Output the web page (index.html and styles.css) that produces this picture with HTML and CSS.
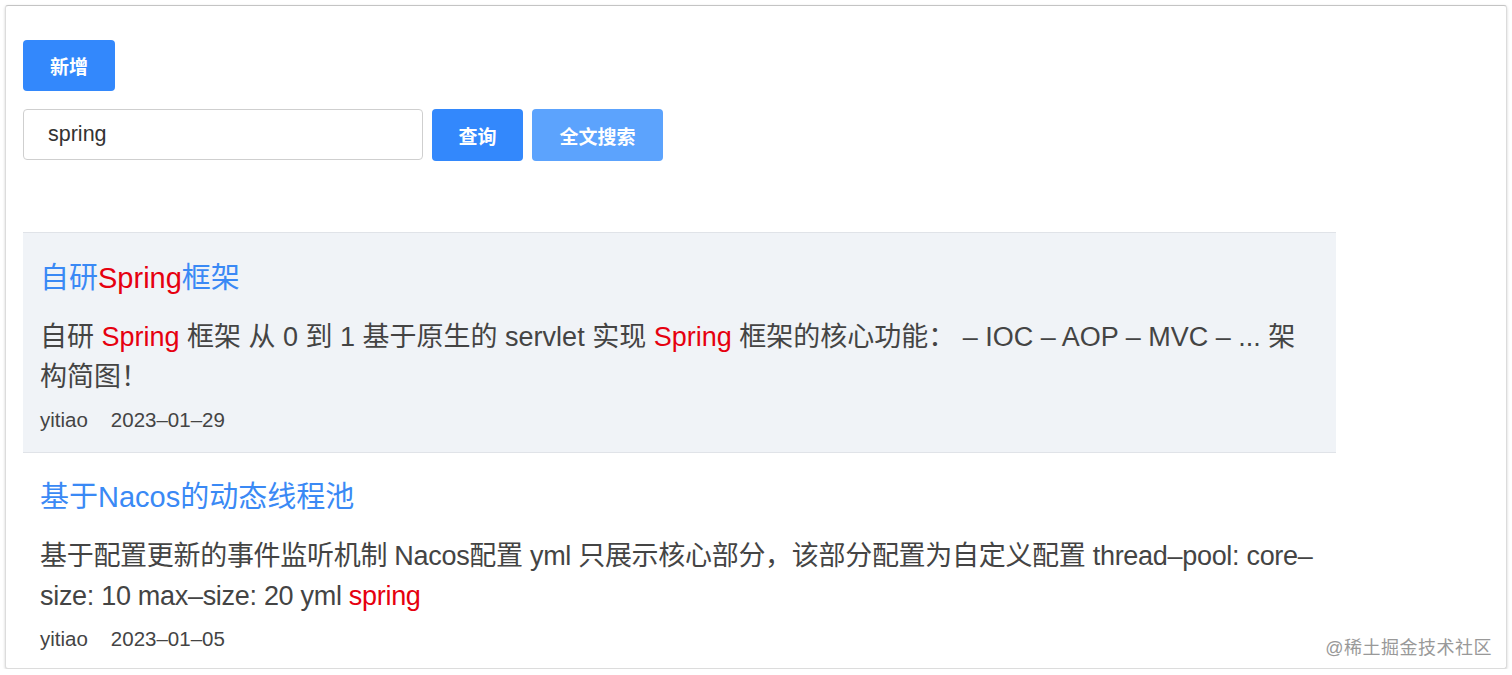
FILE: index.html
```html
<!DOCTYPE html>
<html lang="zh-CN">
<head>
<meta charset="utf-8">
<title>搜索</title>
<link rel="stylesheet" href="styles.css">
</head>
<body>
<div class="window">
  <div class="toolbar">
    <button class="btn btn-primary btn-add">新增</button>
  </div>
  <div class="search">
    <input class="search-input" type="text" value="spring">
    <button class="btn btn-primary btn-query">查询</button>
    <button class="btn btn-light btn-full">全文搜索</button>
  </div>
  <ul class="list">
    <li class="item item-active">
      <h3 class="title">自研<em>Spring</em>框架</h3>
      <p class="desc">自研 <em>Spring</em> 框架 从 0 到 1 基于原生的 servlet 实现 <em>Spring</em> 框架的核心功能： – IOC – AOP – MVC – ... 架构简图！</p>
      <div class="meta"><span>yitiao</span><span>2023–01–29</span></div>
    </li>
    <li class="item">
      <h3 class="title">基于Nacos的动态线程池</h3>
      <p class="desc desc-tight">基于配置更新的事件监听机制 Nacos配置 yml 只展示核心部分，该部分配置为自定义配置 thread–pool: core–size: 10 max–size: 20 yml <em>spring</em></p>
      <div class="meta"><span>yitiao</span><span>2023–01–05</span></div>
    </li>
  </ul>
  <div class="watermark">@稀土掘金技术社区</div>
</div>
</body>
</html>
```
FILE: styles.css
```css
html, body {
  margin: 0;
  padding: 0;
  background: #ffffff;
}
body {
  font-family: "Liberation Sans", "Noto Sans CJK SC", sans-serif;
  color: #444;
  padding: 5px 5px 0 5px;
}
.window {
  position: relative;
  height: 664px;
  box-sizing: border-box;
  background: #fff;
  border: 1px solid #dcdcdc;
  border-top-color: #c4c4c4;
  border-radius: 3px;
  box-shadow: 0 1px 3px rgba(0,0,0,0.18);
  padding: 34px 17px 0 17px;
  overflow: hidden;
}
.toolbar {
  display: flex;
}
.btn {
  border: none;
  border-radius: 4px;
  color: #fff;
  font-family: "Liberation Sans", "Noto Sans CJK SC", sans-serif;
  font-weight: bold;
  font-size: 19px;
  height: 51px;
  padding: 0;
  cursor: pointer;
}
.btn-primary {
  background: #3388fc;
}
.btn-light {
  background: #5ca3fd;
}
.btn-add {
  width: 92px;
}
.search {
  display: flex;
  gap: 9px;
  margin-top: 18px;
}
.search-input {
  width: 400px;
  height: 51px;
  box-sizing: border-box;
  border: 1px solid #cfcfcf;
  border-radius: 4px;
  padding: 0 24px;
  font-family: "Liberation Sans", "Noto Sans CJK SC", sans-serif;
  font-size: 21.5px;
  color: #333;
  outline: none;
}
.btn-query {
  width: 91px;
  height: 52px;
}
.btn-full {
  width: 131px;
  height: 52px;
}
.list {
  list-style: none;
  margin: 71px 0 0 0;
  padding: 0;
  width: 1313px;
}
.item {
  border-top: 1px solid #e0e3e8;
  padding: 25px 17px 20px 17px;
}
.item-active {
  background: #f0f3f7;
  border-bottom: 1px solid #e0e3e8;
}
.item + .item {
  border-top: none;
  padding-top: 24px;
}
.title {
  margin: 0;
  font-size: 29px;
  line-height: 40px;
  font-weight: normal;
  color: #3a89f5;
}
em {
  font-style: normal;
  color: #e6000f;
}
.desc {
  margin: 19px 0 0 0;
  font-size: 27px;
  line-height: 40px;
  color: #444;
}
.desc-tight {
  letter-spacing: -0.3px;
}
.meta {
  margin-top: 11px;
  display: flex;
  gap: 23px;
  font-size: 20.5px;
  line-height: 24px;
  color: #444;
}
.watermark {
  position: absolute;
  right: 14px;
  bottom: 9px;
  font-size: 18px;
  color: #999;
  letter-spacing: 0.5px;
}
```
